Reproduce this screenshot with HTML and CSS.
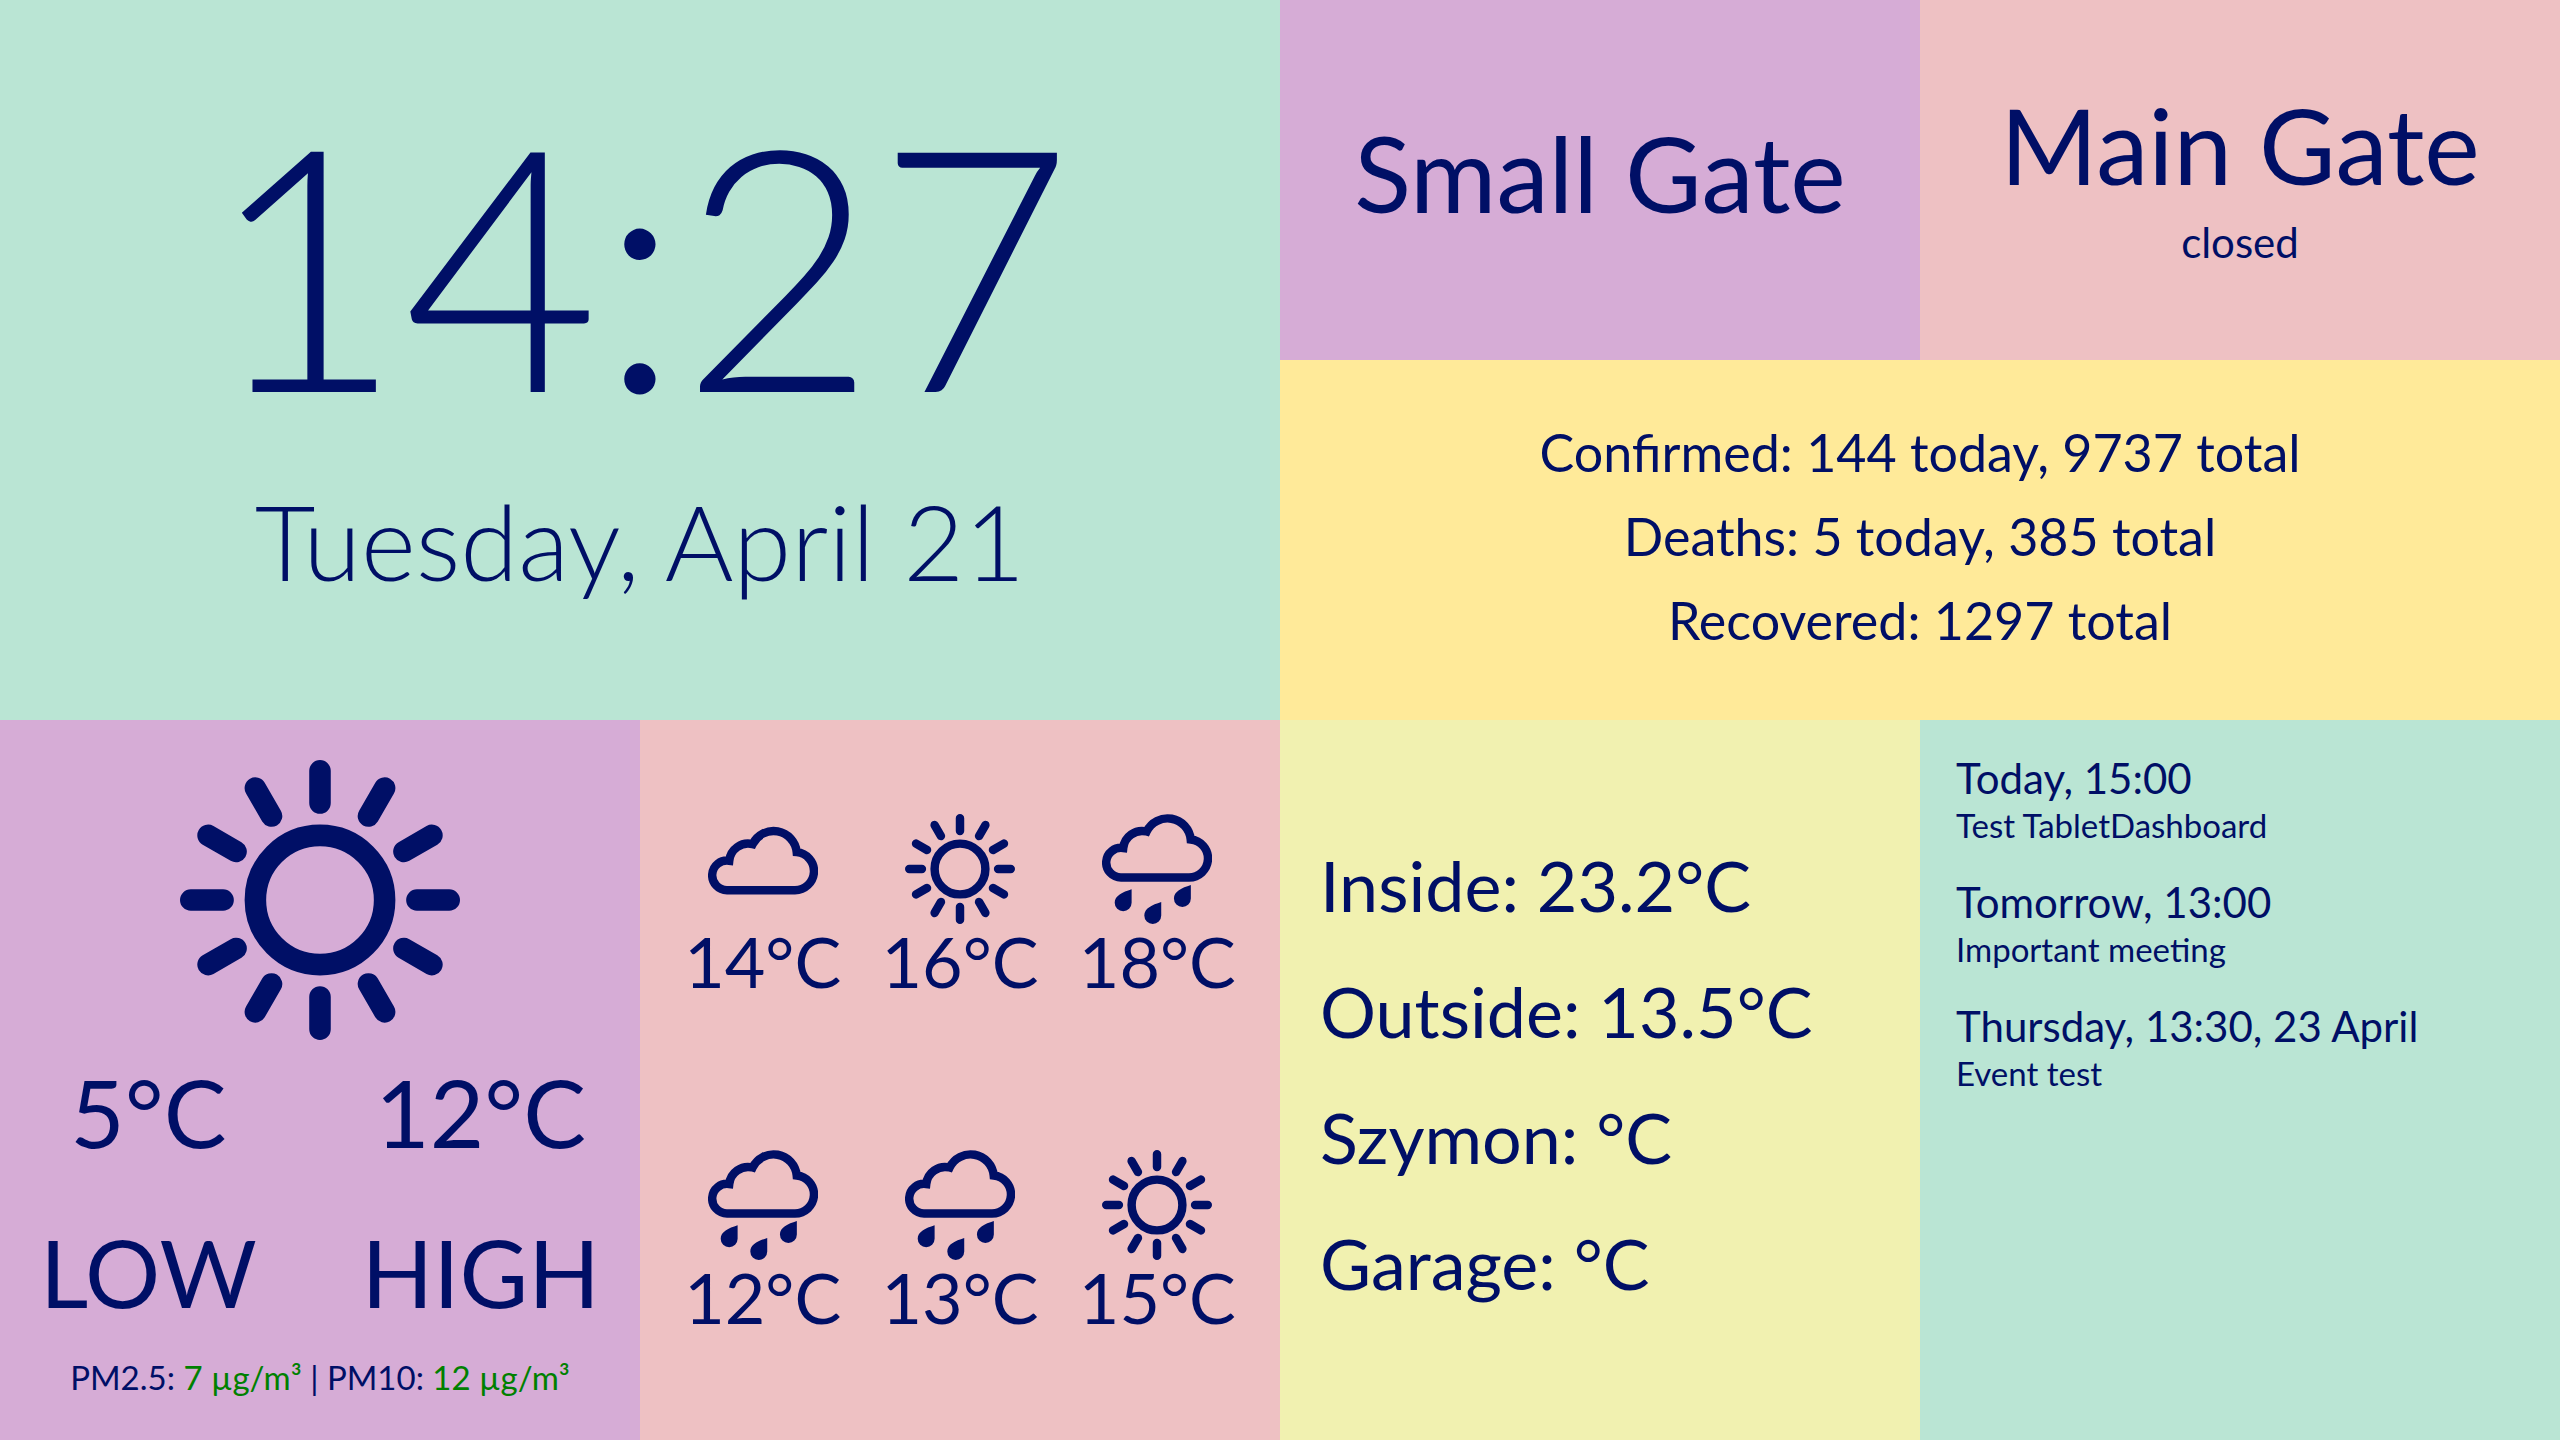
FILE: index.html
```html
<!DOCTYPE html>
<html lang="en">
<head>
<meta charset="utf-8">
<meta name="viewport" content="width=device-width, initial-scale=1">
<title>Home Dashboard</title>
<link rel="stylesheet" href="styles.css">
</head>
<body>
<svg class="sprite" aria-hidden="true">
  <symbol id="icon-sun" viewBox="-13 -13 26 26">
    <g fill="none" stroke="currentColor" stroke-width="2" stroke-linecap="round">
      <circle r="6"/>
      <path d="M0 -12V-9M0 12V9M-12 0H-9M12 0H9"/>
      <path transform="rotate(30)" d="M0 -12V-9M0 12V9M-12 0H-9M12 0H9"/>
      <path transform="rotate(60)" d="M0 -12V-9M0 12V9M-12 0H-9M12 0H9"/>
    </g>
  </symbol>
  <symbol id="icon-cloud" viewBox="0 -3 26 26">
    <path fill="none" stroke="currentColor" stroke-width="2" d="M4.5 15A3.5 3.5 0 1 1 5.02 8.04A4.5 4.5 0 0 1 10.55 4.13A5.5 5.5 0 0 1 20.97 6.02A4.5 4.5 0 0 1 20.5 15Z"/>
  </symbol>
  <symbol id="icon-rain" viewBox="0 0 26 26">
    <path fill="none" stroke="currentColor" stroke-width="2" d="M4.5 15A3.5 3.5 0 1 1 5.02 8.04A4.5 4.5 0 0 1 10.55 4.13A5.5 5.5 0 0 1 20.97 6.02A4.5 4.5 0 0 1 20.5 15Z"/>
    <path fill="currentColor" d="M7 17.8V21a2 2 0 0 1-4 0c0-1.7 1.8-2.5 4-3.2ZM14 20.8V24a2 2 0 0 1-4 0c0-1.7 1.8-2.5 4-3.2ZM21 16.8V20a2 2 0 0 1-4 0c0-1.7 1.8-2.5 4-3.2Z"/>
  </symbol>
</svg>

<main class="dashboard">
  <section class="tile tile--mint clock">
    <time class="clock__time">14:27</time>
    <p class="clock__date">Tuesday, April 21</p>
  </section>

  <section class="tile tile--purple gate gate--small">
    <h2 class="gate__name">Small Gate</h2>
  </section>

  <section class="tile tile--pink gate gate--main">
    <h2 class="gate__name">Main Gate</h2>
    <p class="gate__state">closed</p>
  </section>

  <section class="tile tile--yellow stats">
    <p>Confirmed: 144 today, 9737 total</p>
    <p>Deaths: 5 today, 385 total</p>
    <p>Recovered: 1297 total</p>
  </section>

  <section class="tile tile--purple weather">
    <svg class="weather__icon" role="img" aria-label="Sunny"><use href="#icon-sun"/></svg>
    <div class="weather__range">
      <div class="weather__column"><span>5°C</span><span>LOW</span></div>
      <div class="weather__column"><span>12°C</span><span>HIGH</span></div>
    </div>
    <p class="air">PM2.5: <span class="air__good">7 µg/m³</span> | PM10: <span class="air__good">12 µg/m³</span></p>
  </section>

  <section class="tile tile--pink">
    <ul class="forecast">
      <li class="forecast__item"><svg class="forecast__icon" role="img" aria-label="Cloudy"><use href="#icon-cloud"/></svg>14°C</li>
      <li class="forecast__item"><svg class="forecast__icon" role="img" aria-label="Sunny"><use href="#icon-sun"/></svg>16°C</li>
      <li class="forecast__item"><svg class="forecast__icon" role="img" aria-label="Rain"><use href="#icon-rain"/></svg>18°C</li>
      <li class="forecast__item"><svg class="forecast__icon" role="img" aria-label="Rain"><use href="#icon-rain"/></svg>12°C</li>
      <li class="forecast__item"><svg class="forecast__icon" role="img" aria-label="Rain"><use href="#icon-rain"/></svg>13°C</li>
      <li class="forecast__item"><svg class="forecast__icon" role="img" aria-label="Sunny"><use href="#icon-sun"/></svg>15°C</li>
    </ul>
  </section>

  <section class="tile tile--lime sensors">
    <p>Inside: 23.2°C</p>
    <p>Outside: 13.5°C</p>
    <p>Szymon: °C</p>
    <p>Garage: °C</p>
  </section>

  <section class="tile tile--mint">
    <ul class="calendar">
      <li><p class="calendar__when">Today, 15:00</p><p class="calendar__what">Test TabletDashboard</p></li>
      <li><p class="calendar__when">Tomorrow, 13:00</p><p class="calendar__what">Important meeting</p></li>
      <li><p class="calendar__when">Thursday, 13:30, 23 April</p><p class="calendar__what">Event test</p></li>
    </ul>
  </section>
</main>
</body>
</html>
```

FILE: styles.css
```css
* {
  box-sizing: border-box;
}

body,
h2,
p,
ul {
  margin: 0;
  padding: 0;
}

body {
  color: #000f66;
  font-family: Lato, "Liberation Sans", sans-serif;
  font-weight: 400;
}

ul {
  list-style: none;
}

.sprite {
  display: none;
}

.dashboard {
  display: grid;
  grid-template-columns: repeat(4, 1fr);
  grid-template-rows: 1fr 1fr 2fr;
  min-height: 100vh;
}

.tile {
  display: flex;
  flex-direction: column;
  min-width: 0;
}

.tile--mint { background: #bae5d4; }
.tile--purple { background: #d6acd6; }
.tile--pink { background: #eec1c3; }
.tile--yellow { background: #ffea99; }
.tile--lime { background: #f1f1b0; }

/* Clock */
.clock {
  grid-column: 1 / 3;
  grid-row: 1 / 3;
  align-items: center;
  justify-content: center;
  padding-bottom: 56px;
  font-weight: 300;
}

.clock__time {
  font-size: 338px;
  line-height: 400px;
}

.clock__date {
  margin-top: 16px;
  font-size: 105px;
  line-height: 126px;
}

/* Gates */
.gate {
  align-items: center;
  justify-content: center;
  gap: 14px;
  padding-bottom: 16px;
}

.gate__name {
  font-size: 105px;
  font-weight: 400;
  line-height: 126px;
}

.gate__state {
  font-size: 42px;
  line-height: 42px;
}

/* Case statistics */
.stats {
  grid-column: 3 / 5;
  align-items: center;
  justify-content: center;
  padding-bottom: 8px;
  font-size: 52px;
  line-height: 84px;
}

/* Today's weather */
.weather {
  align-items: center;
  padding: 40px 40px 0;
}

.weather__icon {
  width: 280px;
  height: 280px;
}

.weather__range {
  display: flex;
  align-self: stretch;
  justify-content: space-between;
  margin-top: 16px;
  font-size: 94px;
  line-height: 112px;
}

.weather__column {
  display: flex;
  flex-direction: column;
  align-items: center;
  gap: 48px;
}

.air {
  margin-top: 29px;
  font-size: 33px;
  line-height: 40px;
}

.air__good {
  color: green;
}

/* Forecast */
.forecast {
  flex: 1;
  display: grid;
  grid-template-columns: repeat(3, 1fr);
  grid-template-rows: 1fr 1fr;
  padding: 24px;
}

.forecast__item {
  display: flex;
  flex-direction: column;
  align-items: center;
  justify-content: center;
  padding-bottom: 12px;
  font-size: 70px;
  line-height: 74px;
}

.forecast__icon {
  width: 110px;
  height: 110px;
}

/* Temperature sensors */
.sensors {
  justify-content: center;
  padding: 0 40px 12px;
  font-size: 70px;
  line-height: 126px;
}

/* Calendar */
.calendar {
  display: flex;
  flex-direction: column;
  gap: 30px;
  padding: 32px 36px;
}

.calendar__when {
  font-size: 42px;
  line-height: 52px;
}

.calendar__what {
  font-size: 33px;
  line-height: 42px;
}
```
